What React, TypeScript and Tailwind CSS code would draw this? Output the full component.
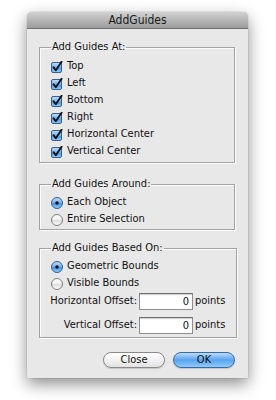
const font = { fontFamily: '"DejaVu Sans Condensed", "DejaVu Sans", sans-serif' }

function CheckBox() {
    return (
        <svg width="12" height="12" viewBox="0 0 12 12" className="shrink-0">
            <defs>
                <linearGradient id="cbg" x1="0" y1="0" x2="0" y2="1">
                    <stop offset="0" stopColor="#c3e0fb" />
                    <stop offset="0.5" stopColor="#6fb1ef" />
                    <stop offset="0.55" stopColor="#4d97e6" />
                    <stop offset="1" stopColor="#8fd0ff" />
                </linearGradient>
            </defs>
            <rect x="0.5" y="1.5" width="10" height="10" rx="1.5" fill="url(#cbg)" stroke="#3a5f8c" />
            <path d="M2.6 6.2 L4.8 9.2 L10.6 0.8" fill="none" stroke="#111" strokeWidth="1.9" strokeLinecap="round" strokeLinejoin="round" />
        </svg>
    )
}

function Radio({ on }: { on?: boolean }) {
    return (
        <svg width="12" height="12" viewBox="0 0 12 12" className="shrink-0">
            <defs>
                <linearGradient id="rbOn" x1="0" y1="0" x2="0" y2="1">
                    <stop offset="0" stopColor="#c3e0fb" />
                    <stop offset="0.5" stopColor="#6fb1ef" />
                    <stop offset="0.55" stopColor="#4d97e6" />
                    <stop offset="1" stopColor="#8fd0ff" />
                </linearGradient>
                <linearGradient id="rbOff" x1="0" y1="0" x2="0" y2="1">
                    <stop offset="0" stopColor="#ffffff" />
                    <stop offset="0.5" stopColor="#f0f0f0" />
                    <stop offset="0.55" stopColor="#dedede" />
                    <stop offset="1" stopColor="#ffffff" />
                </linearGradient>
            </defs>
            <circle cx="6" cy="6" r="5.5" fill={on ? "url(#rbOn)" : "url(#rbOff)"} stroke={on ? "#3a5f8c" : "#7d7d7d"} />
            {on && <circle cx="6" cy="6" r="1.8" fill="#111" />}
        </svg>
    )
}

function Group({ title, className, children }: { title: string; className?: string; children: React.ReactNode }) {
    return (
        <fieldset className={"border border-[#a3a3a3] px-[11px] shadow-[1px_1px_0_#fbfbfb,inset_1px_1px_0_#fbfbfb] " + (className || "")}>
            <legend className="px-[1px] leading-[14px] text-[11px] text-[#111]">{title}</legend>
            {children}
        </fieldset>
    )
}

function Row({ children }: { children: React.ReactNode }) {
    return <div className="flex items-center gap-[4px] h-[17px] text-[11px] text-[#111]">{children}</div>
}

function OffsetRow({ label, className }: { label: string; className?: string }) {
    return (
        <div className={"flex items-center h-[17px] text-[11px] text-[#111] " + (className || "")}>
            <div className="w-[87px] shrink-0 flex justify-end whitespace-nowrap pr-[1px]">{label}</div>
            <div className="ml-[1px] w-[54px] h-[17px] bg-white border border-[#8e8e8e] border-t-[#6e6e6e] shadow-[inset_0_1px_1px_rgba(0,0,0,0.2)] text-right pr-[3px] leading-[15px]">0</div>
            <span className="ml-[2px]">points</span>
        </div>
    )
}

export default function App() {
    return (
        <div className="w-[276px] h-[400px] bg-white pt-[12px] pl-[27px]" style={font}>
            <div className="w-[221px] h-[366px] flex flex-col bg-[#e8e8e8] rounded-t-[5px] shadow-[0_6px_16px_rgba(0,0,0,0.45),0_0_1px_rgba(0,0,0,0.5)]">
                {/* title bar */}
                <div className="h-[17px] shrink-0 rounded-t-[5px] border-b border-[#6f6f6f] bg-gradient-to-b from-[#d2d2d2] to-[#9c9c9c] text-center text-[12px] leading-[16px] text-[#1a1a1a]">
                    AddGuides
                </div>

                <div className="flex flex-col pl-[12px] pr-[13px] pt-[11px]">
                    <Group title="Add Guides At:" className="pt-[4px] pb-[2px]">
                        {["Top", "Left", "Bottom", "Right", "Horizontal Center", "Vertical Center"].map((t) => (
                            <Row key={t}>
                                <CheckBox />
                                <span>{t}</span>
                            </Row>
                        ))}
                    </Group>

                    <Group title="Add Guides Around:" className="mt-[14px] pt-[3px] pb-[1px]">
                        <Row>
                            <Radio on />
                            <span>Each Object</span>
                        </Row>
                        <Row>
                            <Radio />
                            <span>Entire Selection</span>
                        </Row>
                    </Group>

                    <Group title="Add Guides Based On:" className="mt-[11px] pt-[3px] pb-[3px]">
                        <Row>
                            <Radio on />
                            <span>Geometric Bounds</span>
                        </Row>
                        <Row>
                            <Radio />
                            <span>Visible Bounds</span>
                        </Row>
                        <OffsetRow label="Horizontal Offset:" className="mt-[1px]" />
                        <OffsetRow label="Vertical Offset:" className="mt-[7px]" />
                    </Group>

                    <div className="mt-[14px] flex justify-end gap-[8px]">
                        <button className="w-[62px] h-[16px] rounded-full border border-[#8a8a8a] bg-gradient-to-b from-[#ffffff] via-[#f2f2f2] to-[#e2e2e2] text-[11px] leading-[14px] text-[#111] shadow-[0_1px_1px_rgba(0,0,0,0.15)]">
                            Close
                        </button>
                        <button className="w-[62px] h-[16px] rounded-full border border-[#3a67a8] bg-gradient-to-b from-[#b9dcfb] via-[#5aa3ee] to-[#8fcbfb] text-[11px] leading-[14px] text-[#111] shadow-[0_1px_1px_rgba(0,0,0,0.15)]">
                            OK
                        </button>
                    </div>
                </div>
            </div>
        </div>
    )
}
